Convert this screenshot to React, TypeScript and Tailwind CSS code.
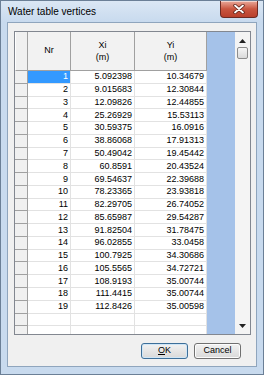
import React from 'react';

const xi = ['5.092398', '9.015683', '12.09826', '25.26929', '30.59375', '38.86068', '50.49042', '60.8591', '69.54637', '78.23365', '82.29705', '85.65987', '91.82504', '96.02855', '100.7925', '105.5565', '108.9193', '111.4415', '112.8426'];
const yi = ['10.34679', '12.30844', '12.44855', '15.53113', '16.0916', '17.91313', '19.45442', '20.43524', '22.39688', '23.93818', '26.74052', '29.54287', '31.78475', '33.0458', '34.30686', '34.72721', '35.00744', '35.00744', '35.00598'];

const rows = [...xi.map((x, i) => ({ nr: String(i + 1), x, y: yi[i] })), { nr: '', x: '', y: '' }, { nr: '', x: '', y: '' }];

const CloseButton = () => (
    <div className="w-[38px] h-[17px] -mr-[1px] rounded-b-[4px] border border-t-0 border-[#6d2a22] bg-gradient-to-b from-[#e9a99b] via-[#c9553f] to-[#b9402c] flex items-center justify-center shadow-[inset_0_1px_0_rgba(255,255,255,0.5)]">
        <svg width="12" height="10" viewBox="0 0 12 10">
            <path d="M2 1.5l8 7M10 1.5l-8 7" stroke="#5a2018" strokeWidth="3.4" strokeLinecap="round" />
            <path d="M2 1.5l8 7M10 1.5l-8 7" stroke="#ffffff" strokeWidth="1.8" strokeLinecap="round" />
        </svg>
    </div>
);

const App = () => {
    return (
        <div className="w-[264px] h-[375px] flex flex-col border border-[#6b7f96] bg-[#c8daee] px-[6px] pb-[7px]" style={{ fontFamily: '"Liberation Sans", Arial, sans-serif' }}>
            <div className="h-[21px] flex justify-between items-start bg-gradient-to-b from-[#dbe7f4] to-[#c8daee] -mx-[6px] px-[6px]">
                <span className="text-[10px] text-black pl-[1px] leading-[21px]">Water table vertices</span>
                <CloseButton />
            </div>
            <div className="flex-1 flex flex-col border border-[#8fa5bd] bg-[#f0f0f0] pl-[6px] pr-[5px] pt-[8px]">
                <div className="h-[304px] flex border border-[#828790] bg-white overflow-hidden">
                    <div className="w-[192px] flex flex-col">
                        <div className="h-[39px] flex shrink-0 text-[9px] text-black">
                            <div className="w-[13px] border-l border-l-white border-r border-b border-[#a0a0a0] bg-[#f0f0f0]" />
                            <div className="w-[43px] border-r border-b border-[#a0a0a0] bg-[#f2f2f2] flex items-center justify-center">Nr</div>
                            <div className="w-[64px] border-r border-b border-[#a0a0a0] bg-[#f2f2f2] flex flex-col items-center justify-center leading-[12px]">
                                <span>Xi</span>
                                <span>(m)</span>
                            </div>
                            <div className="w-[72px] border-r border-b border-[#a0a0a0] bg-[#f2f2f2] flex flex-col items-center justify-center leading-[12px]">
                                <span>Yi</span>
                                <span>(m)</span>
                            </div>
                        </div>
                        {rows.map((r, i) => (
                            <div key={i} className="h-[12.78px] flex shrink-0 text-[9px] text-black leading-none">
                                <div className="w-[13px] border-r border-b border-[#a0a0a0] bg-[#f0f0f0]" />
                                <div className={`w-[43px] border-r border-b border-[#e2e2e2] flex items-center justify-end pr-[2px] ${i === 0 ? 'bg-[#3399ff] text-white' : ''}`}>{r.nr}</div>
                                <div className="w-[64px] border-r border-b border-[#e2e2e2] flex items-center justify-end pr-[2px]">{r.x}</div>
                                <div className="w-[72px] border-r border-b border-[#e2e2e2] flex items-center justify-end pr-[2px]">{r.y}</div>
                            </div>
                        ))}
                    </div>
                    <div className="w-[29px] bg-[#a5c2e9]" />
                    <div className="w-[15px] bg-[#f4f4f4] flex flex-col items-center">
                        <svg width="7" height="4" viewBox="0 0 7 4" className="mt-[7px]">
                            <path d="M0 4L3.5 0L7 4Z" fill="#222" />
                        </svg>
                        <div className="mt-[4px] w-[11px] h-[12px] rounded-[2px] border border-[#8d8d8d] bg-gradient-to-b from-[#f6f6f6] to-[#dadada]" />
                        <div className="flex-1" />
                        <svg width="7" height="4" viewBox="0 0 7 4" className="mb-[6px]">
                            <path d="M0 0L3.5 4L7 0Z" fill="#222" />
                        </svg>
                    </div>
                </div>
                <div className="flex justify-end gap-[6px] mt-[8px] pr-[10px] text-[9px] text-black">
                    <button className="w-[47px] h-[16px] rounded-[3px] border border-[#3d6f99] bg-gradient-to-b from-[#f2f2f2] to-[#d9d9d9] shadow-[inset_0_0_0_1px_#cfe6f7] flex items-center justify-center">
                        <span><span className="underline">O</span>K</span>
                    </button>
                    <button className="w-[47px] h-[16px] rounded-[3px] border border-[#707070] bg-gradient-to-b from-[#f2f2f2] to-[#d9d9d9] shadow-[inset_0_0_0_1px_#fcfcfc] flex items-center justify-center">
                        Cancel
                    </button>
                </div>
            </div>
        </div>
    );
};

export default App;
